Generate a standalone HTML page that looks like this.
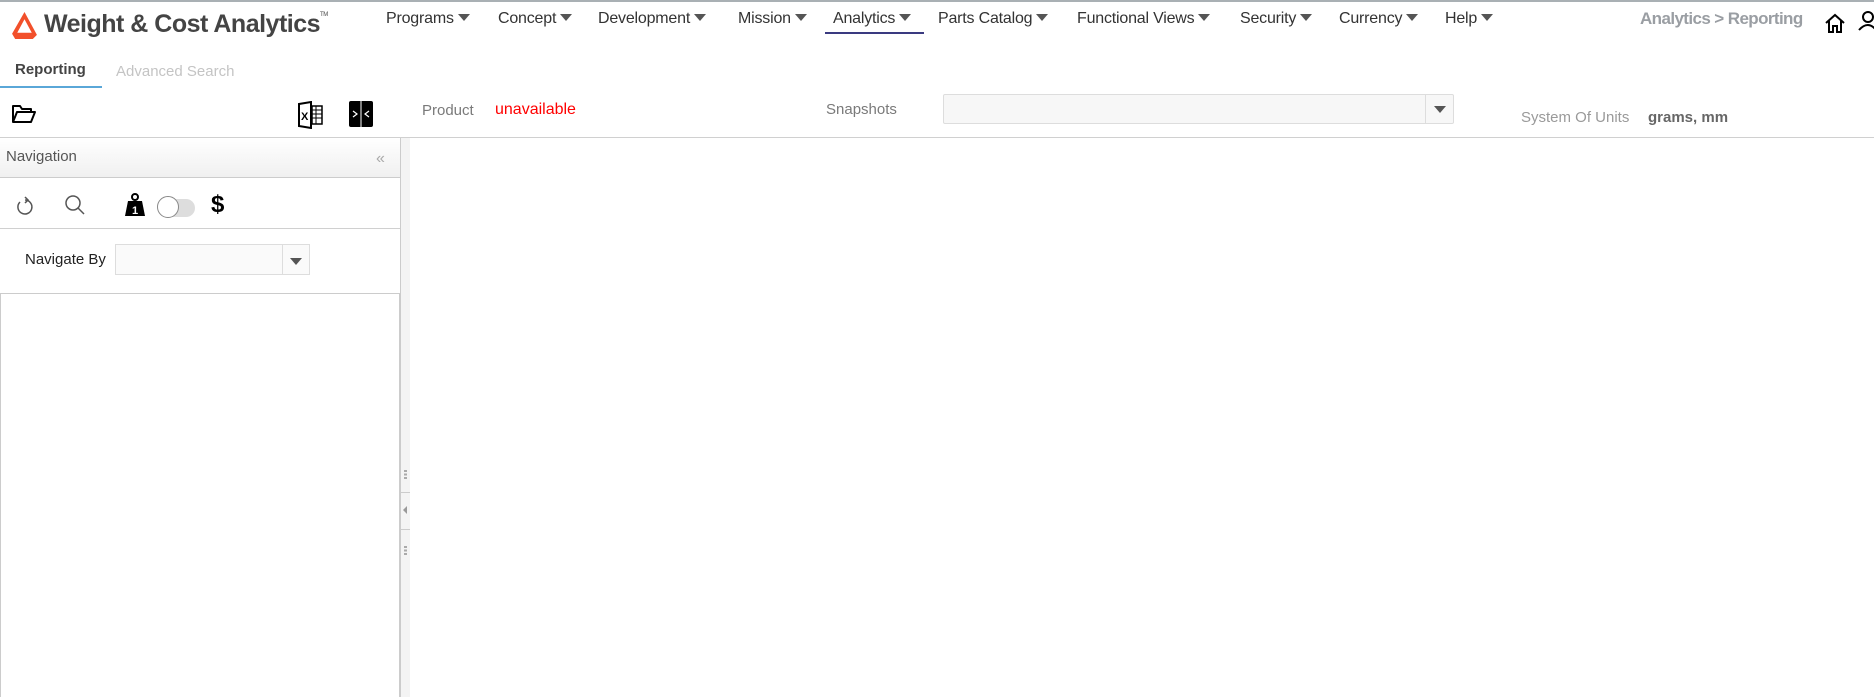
<!DOCTYPE html>
<html><head><meta charset="utf-8"><style>
*{margin:0;padding:0;box-sizing:border-box}
body{width:1874px;height:697px;overflow:hidden;background:#fff;font-family:"Liberation Sans",sans-serif;position:relative;color:#333}
.a{position:absolute;white-space:nowrap}
.m{font-size:16px;color:#333;top:10px;letter-spacing:-0.2px}
.m:after{content:"";display:inline-block;margin-left:4px;border-left:6px solid transparent;border-right:6px solid transparent;border-top:7px solid #555;vertical-align:2px}
</style></head><body>
<div class="a" style="left:0;top:0;width:1874px;height:2px;background:#a9b0b4"></div>
<svg class="a" style="left:11px;top:11px" width="27" height="29" viewBox="0 0 26 28"><path d="M13 1 L25 23 L21 27 L4 27 L1 22 Z M13 8 L6 21 L20 21 Z" fill="#f2502b" fill-rule="evenodd"/></svg>
<div class="a" style="left:44px;top:10px;font-size:25px;font-weight:bold;color:#444;letter-spacing:-0.5px">Weight &amp; Cost Analytics<sup style="font-size:6px;font-weight:normal;vertical-align:16px">TM</sup></div>
<div class="a m" style="left:386px">Programs</div>
<div class="a m" style="left:498px">Concept</div>
<div class="a m" style="left:598px">Development</div>
<div class="a m" style="left:738px">Mission</div>
<div class="a m" style="left:833px">Analytics</div>
<div class="a" style="left:825px;top:32px;width:99px;height:2px;background:#3a3a80"></div>
<div class="a m" style="left:938px">Parts Catalog</div>
<div class="a m" style="left:1077px">Functional Views</div>
<div class="a m" style="left:1240px">Security</div>
<div class="a m" style="left:1339px">Currency</div>
<div class="a m" style="left:1445px">Help</div>
<div class="a" style="left:1640px;top:9px;font-size:17px;font-weight:bold;color:#9a9ea3;letter-spacing:-0.6px">Analytics &gt; Reporting</div>
<svg class="a" style="left:1824px;top:12px" width="22" height="22" viewBox="0 0 22 22"><path d="M2 11 L11 3 L20 11 M5 9 V20 H9 V14 H13 V20 H17 V9" fill="none" stroke="#000" stroke-width="2"/></svg>
<svg class="a" style="left:1858px;top:10px" width="16" height="24" viewBox="0 0 16 24"><circle cx="10" cy="7" r="5" fill="none" stroke="#000" stroke-width="2"/><path d="M1 20 Q10 10 18 20" fill="none" stroke="#000" stroke-width="2"/></svg>

<div class="a" style="left:15px;top:61px;font-size:15px;font-weight:bold;color:#444">Reporting</div>
<div class="a" style="left:0;top:86px;width:102px;height:2px;background:#5aa7d8"></div>
<div class="a" style="left:116px;top:63px;font-size:15px;color:#c4c4c4">Advanced Search</div>

<svg class="a" style="left:12px;top:104px" width="24" height="20" viewBox="0 0 24 20"><path d="M1 18 V2 H8 L10 5 H19 V8 M1 18 L5 8 H23 L19 18 Z" fill="none" stroke="#000" stroke-width="2" stroke-linejoin="round"/></svg>
<svg class="a" style="left:298px;top:101px" width="26" height="28" viewBox="0 0 26 28"><path d="M1 3 L13 1 V27 L1 25 Z" fill="#fff" stroke="#000" stroke-width="2"/><text x="3" y="19" font-size="11" font-weight="bold" font-family="Liberation Sans">X</text><rect x="14" y="5" width="10" height="18" fill="none" stroke="#000" stroke-width="1.5"/><path d="M14 9H24M14 13H24M14 17H24M18 5V23" stroke="#000"/></svg>
<svg class="a" style="left:349px;top:101px" width="24" height="26" viewBox="0 0 24 26"><rect x="0" y="0" width="24" height="26" rx="2" fill="#000"/><rect x="11.5" y="0" width="1" height="26" fill="#fff"/><path d="M4 10 L8 13 L4 16 M20 10 L16 13 L20 16" fill="none" stroke="#fff" stroke-width="1.2"/></svg>
<div class="a" style="left:422px;top:102px;font-size:15px;color:#7a7a7a">Product</div>
<div class="a" style="left:495px;top:101px;font-size:16px;color:#f00">unavailable</div>
<div class="a" style="left:826px;top:101px;font-size:15px;color:#7a7a7a">Snapshots</div>
<div class="a" style="left:943px;top:94px;width:511px;height:30px;border:1px solid #ddd;background:#f7f7f7;border-radius:2px"></div>
<div class="a" style="left:1425px;top:95px;width:1px;height:28px;background:#ddd"></div>
<div class="a" style="left:1434px;top:106px;border-left:6px solid transparent;border-right:6px solid transparent;border-top:7px solid #555"></div>
<div class="a" style="left:1521px;top:109px;font-size:15px;color:#9a9a9a">System Of Units</div>
<div class="a" style="left:1648px;top:109px;font-size:15px;font-weight:bold;color:#666">grams, mm</div>
<div class="a" style="left:0;top:137px;width:1874px;height:1px;background:#d0d0d0"></div>

<div class="a" style="left:0;top:138px;width:400px;height:40px;background:linear-gradient(#fff,#f0f0f0);border-bottom:1px solid #ccc"></div>
<div class="a" style="left:6px;top:148px;font-size:15px;color:#555">Navigation</div>
<div class="a" style="left:376px;top:150px;font-size:16px;color:#aaa">«</div>
<svg class="a" style="left:16px;top:196px" width="18" height="20" viewBox="0 0 18 20"><path d="M4 6 A7 7 0 1 0 9 4" fill="none" stroke="#555" stroke-width="1.5"/><path d="M9 1 L12 4 L9 7" fill="none" stroke="#555" stroke-width="1.5"/></svg>
<svg class="a" style="left:64px;top:194px" width="22" height="22" viewBox="0 0 22 22"><circle cx="9" cy="9" r="7" fill="none" stroke="#555" stroke-width="1.5"/><path d="M14 14 L20 20" stroke="#555" stroke-width="1.5"/></svg>
<svg class="a" style="left:124px;top:193px" width="22" height="24" viewBox="0 0 22 24"><circle cx="11" cy="4" r="3" fill="none" stroke="#000" stroke-width="2"/><path d="M4 8 H18 L21 23 H1 Z" fill="#000"/><text x="8" y="21" font-size="11" font-weight="bold" fill="#fff" font-family="Liberation Sans">1</text></svg>
<div class="a" style="left:158px;top:199px;width:37px;height:18px;border-radius:9px;background:#ddd"></div>
<div class="a" style="left:157px;top:196px;width:22px;height:22px;border-radius:50%;background:#fff;border:1px solid #888"></div>
<div class="a" style="left:211px;top:191px;font-size:24px;font-weight:bold;color:#000">$</div>
<div class="a" style="left:0;top:228px;width:400px;height:1px;background:#d0d0d0"></div>
<div class="a" style="left:25px;top:251px;font-size:15px;color:#222">Navigate By</div>
<div class="a" style="left:115px;top:244px;width:195px;height:31px;border:1px solid #ddd;background:#fafafa"></div>
<div class="a" style="left:282px;top:245px;width:1px;height:29px;background:#ddd"></div>
<div class="a" style="left:290px;top:258px;border-left:6px solid transparent;border-right:6px solid transparent;border-top:7px solid #555"></div>
<div class="a" style="left:0;top:293px;width:400px;height:404px;border:1px solid #ccc;border-bottom:none"></div>

<div class="a" style="left:400px;top:138px;width:10px;height:559px;background:#f4f4f4;border-left:1px solid #ccc"></div>
<div class="a" style="left:400px;top:492px;width:10px;height:1px;background:#ccc"></div>
<div class="a" style="left:400px;top:529px;width:10px;height:1px;background:#ccc"></div>
<div class="a" style="left:404px;top:470px;width:3px;height:9px;background:repeating-linear-gradient(#aaa 0 2px,transparent 2px 3.5px)"></div>
<div class="a" style="left:404px;top:546px;width:3px;height:9px;background:repeating-linear-gradient(#aaa 0 2px,transparent 2px 3.5px)"></div>
<div class="a" style="left:403px;top:506px;border-top:4px solid transparent;border-bottom:4px solid transparent;border-right:4px solid #999"></div>
</body></html>
